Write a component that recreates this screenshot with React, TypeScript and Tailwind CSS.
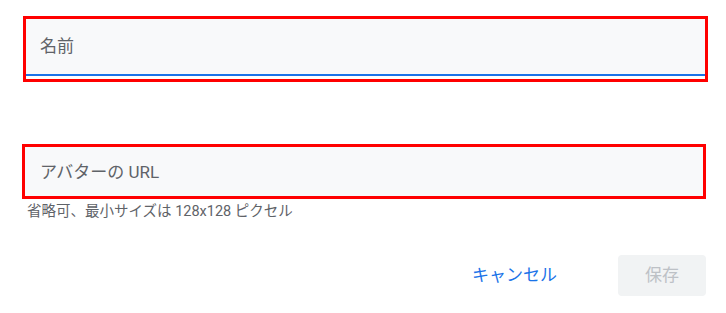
export default function App() {
  return (
    <div
      className="min-h-[313px] w-[726px] bg-white pl-[22px] pr-[18px] pt-4"
      style={{ fontFamily: 'Roboto, "Noto Sans CJK JP", sans-serif' }}
    >
      {/* 名前 */}
      <div className="ml-px border-[3px] border-[#ff0000] pb-[3px]">
        <div className="flex h-[57px] items-center border-b-2 border-[#1a73e8] bg-[#f8f9fa] px-[14px] text-[17px] text-[#5f6368]">
          名前
        </div>
      </div>

      {/* アバターの URL */}
      <div className="mt-[62px] mr-[2px] border-[3px] border-[#ff0000]">
        <div className="flex h-[49px] items-center bg-[#f8f9fa] px-[15px] pt-[3px] text-[17px] text-[#5f6368]">
          アバターの URL
        </div>
      </div>
      <p className="mt-[5px] pl-[5px] text-[14.5px] leading-[16px] text-[#5f6368]">
        省略可、最小サイズは 128x128 ピクセル
      </p>

      {/* ボタン */}
      <div className="mt-[35px] mr-[2px] flex items-center justify-end">
        <button
          type="button"
          className="mr-[61px] text-[17px] text-[#1a73e8]"
        >
          キャンセル
        </button>
        <button
          type="button"
          disabled
          className="h-[41px] w-[88px] rounded-[4px] bg-[#f1f3f4] text-[17px] text-[#bdc1c6]"
        >
          保存
        </button>
      </div>
    </div>
  );
}
